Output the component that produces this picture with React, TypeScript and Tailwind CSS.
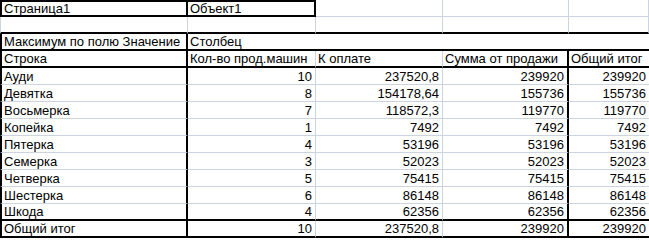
import React from "react";

type Line = "k" | "g" | "n";

const R: Record<Line, string> = {
  k: "border-r-2 border-r-black",
  g: "border-r border-r-[#ccd4e2]",
  n: "",
};
const B: Record<Line, string> = {
  k: "border-b-2 border-b-black",
  g: "border-b border-b-[#ccd4e2]",
  n: "",
};
const L: Record<Line, string> = {
  k: "border-l-2 border-l-black",
  g: "border-l border-l-[#ccd4e2]",
  n: "",
};
const T: Record<Line, string> = {
  k: "border-t-2 border-t-black",
  g: "border-t border-t-[#ccd4e2]",
  n: "",
};

function Cell({
  children,
  r = "g",
  b = "g",
  l = "n",
  t = "n",
  right = false,
  span = false,
}: {
  children?: React.ReactNode;
  r?: Line;
  b?: Line;
  l?: Line;
  t?: Line;
  right?: boolean;
  span?: boolean;
}) {
  return (
    <div
      className={[
        "flex items-center overflow-hidden whitespace-nowrap px-[2px] leading-[15px]",
        right ? "justify-end pr-[3px]" : "justify-start",
        span ? "col-span-4" : "",
        R[r],
        B[b],
        L[l],
        T[t],
      ].join(" ")}
    >
      {children}
    </div>
  );
}

const rows: [string, string, string, string, string][] = [
  ["Ауди", "10", "237520,8", "239920", "239920"],
  ["Девятка", "8", "154178,64", "155736", "155736"],
  ["Восьмерка", "7", "118572,3", "119770", "119770"],
  ["Копейка", "1", "7492", "7492", "7492"],
  ["Пятерка", "4", "53196", "53196", "53196"],
  ["Семерка", "3", "52023", "52023", "52023"],
  ["Четверка", "5", "75415", "75415", "75415"],
  ["Шестерка", "6", "86148", "86148", "86148"],
  ["Шкода", "4", "62356", "62356", "62356"],
];

export default function App() {
  return (
    <div className="h-[240px] w-[649px] overflow-hidden bg-white font-['Liberation_Sans',Arial,sans-serif] text-[13px] text-black">
      <div className="grid grid-cols-[188px_128px_127px_126px_80px] auto-rows-[17px]">
        {/* Row 1 */}
        <Cell t="k" l="k" r="k" b="k">Страница1</Cell>
        <Cell t="k" r="k" b="k">Объект1</Cell>
        <Cell />
        <Cell />
        <Cell />
        {/* Row 2 */}
        <Cell l="g" b="k" />
        <Cell b="k" />
        <Cell b="k" />
        <Cell b="k" />
        <Cell b="k" />
        {/* Row 3 */}
        <Cell l="k" r="k" b="k">Максимум по полю Значение</Cell>
        <Cell span r="n" b="k">Столбец</Cell>
        {/* Row 4 */}
        <Cell l="k" r="k" b="k">Строка</Cell>
        <Cell b="k">Кол-во прод.машин</Cell>
        <Cell b="k">К оплате</Cell>
        <Cell r="k" b="k">Сумма от продажи</Cell>
        <Cell r="n" b="k">Общий итог</Cell>
        {rows.map((row, i) => {
          const last = i === rows.length - 1;
          const bl: Line = last ? "k" : "g";
          return (
            <React.Fragment key={row[0]}>
              <Cell l="k" r="k" b={bl}>{row[0]}</Cell>
              <Cell right b={bl}>{row[1]}</Cell>
              <Cell right b={bl}>{row[2]}</Cell>
              <Cell right r="k" b={bl}>{row[3]}</Cell>
              <Cell right r="n" b={bl}>{row[4]}</Cell>
            </React.Fragment>
          );
        })}
        {/* Total */}
        <Cell l="k" r="k" b="k">Общий итог</Cell>
        <Cell right b="k">10</Cell>
        <Cell right b="k">237520,8</Cell>
        <Cell right r="k" b="k">239920</Cell>
        <Cell right r="n" b="k">239920</Cell>
      </div>
    </div>
  );
}
